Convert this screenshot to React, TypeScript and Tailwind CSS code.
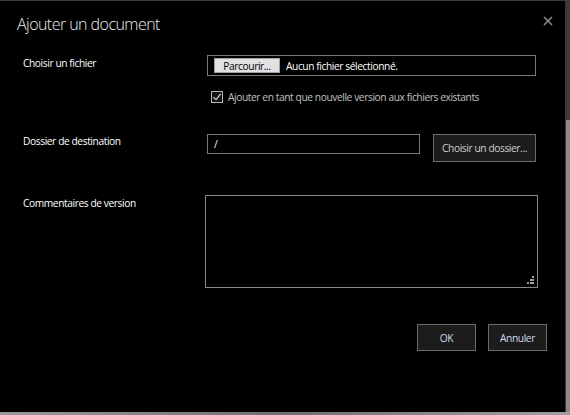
import React from "react";

const font = { fontFamily: '"Open Sans", "Noto Sans", sans-serif' };

const sm = "text-[10.2px] tracking-[-0.4px] leading-[14px]";

export default function App() {
  return (
    <div className="w-[570px] h-[415px] flex flex-col bg-[#8a8a8a] overflow-hidden" style={font}>
      <div className="flex h-[412px]">
        <div className="w-[566px] h-[412px] bg-black border-t border-r border-[#3a3a3a] flex flex-col">
          <div className="flex justify-between items-start pl-[17px] pr-[12px] pt-[12px]">
            <h1 className="text-[16px] leading-[22px] font-light text-[#ececec] tracking-[-0.55px]">Ajouter un document</h1>
            <button className="mt-[3px]">
              <svg width="10" height="10" viewBox="0 0 10 10">
                <path d="M1 1L9 9M9 1L1 9" stroke="#8a8a8a" strokeWidth="1.6" />
              </svg>
            </button>
          </div>

          <div className="flex flex-col pl-[23px] mt-[20px]">
            <div className="flex">
              <div className={`w-[184px] text-white pt-[1px] ${sm}`}>Choisir un fichier</div>
              <div className="flex flex-col">
                <div className="w-[329px] h-[21px] border border-[#7a7a7a] flex items-center pl-[6px] gap-[6px]">
                  <div className={`w-[66px] h-[15px] bg-[#e1e1e1] border border-[#a0a0a0] text-black flex items-center justify-center ${sm}`}>Parcourir...</div>
                  <span className={`text-white ${sm}`}>Aucun fichier sélectionné.</span>
                </div>
                <div className="flex items-center mt-[14px] ml-[4px] gap-[5px]">
                  <div className="w-[12px] h-[12px] border border-[#b5b5b5] bg-[#141414] flex items-center justify-center">
                    <svg width="10" height="10" viewBox="0 0 10 10">
                      <path d="M1.5 5.2L4 7.6L8.6 2" stroke="#d0d0d0" strokeWidth="1.2" fill="none" />
                    </svg>
                  </div>
                  <span className={`text-[#c2c2c2] ${sm}`}>Ajouter en tant que nouvelle version aux fichiers existants</span>
                </div>
              </div>
            </div>

            <div className="flex mt-[30px]">
              <div className={`w-[184px] text-white ${sm}`}>Dossier de destination</div>
              <div className={`w-[213px] h-[20px] border border-[#7a7a7a] text-white pl-[6px] pt-[2px] ${sm}`}>/</div>
              <button className={`ml-[13px] w-[103px] h-[28px] bg-[#1c1c1c] border border-[#6a6a6a] text-[#d0d0d0] ${sm}`}>Choisir un dossier...</button>
            </div>

            <div className="flex mt-[33px]">
              <div className={`w-[182px] text-white pt-[1px] ${sm}`}>Commentaires de version</div>
              <div className="relative w-[333px] h-[93px] border border-[#8a8a8a]">
                <svg className="absolute right-[2px] bottom-[2px]" width="9" height="9" viewBox="0 0 9 9">
                  <rect x="6" y="0" width="2" height="2" fill="#a0a0a0" />
                  <rect x="4" y="3" width="2" height="2" fill="#a0a0a0" />
                  <rect x="6" y="3" width="2" height="2" fill="#a0a0a0" />
                  <rect x="1" y="6" width="2" height="2" fill="#a0a0a0" />
                  <rect x="4" y="6" width="2" height="2" fill="#a0a0a0" />
                  <rect x="6" y="6" width="2" height="2" fill="#a0a0a0" />
                </svg>
              </div>
            </div>
          </div>

          <div className="flex justify-end gap-[12px] pr-[18px] mt-[36px]">
            <button className={`w-[59px] h-[27px] bg-[#1c1c1c] border border-[#6a6a6a] text-[#c9d9ee] ${sm}`}>OK</button>
            <button className={`w-[59px] h-[27px] bg-[#1c1c1c] border border-[#6a6a6a] text-[#c9d9ee] ${sm}`}>Annuler</button>
          </div>
        </div>
        <div className="flex flex-col w-[4px]">
          <div className="h-[120px] bg-[#3c3c3c]" />
          <div className="flex-1 bg-[#8a8a8a]" />
        </div>
      </div>
      <div className="h-[3px] bg-gradient-to-r from-[#9a9a9a] via-[#6f6f6f] to-[#a0a0a0]" />
    </div>
  );
}
